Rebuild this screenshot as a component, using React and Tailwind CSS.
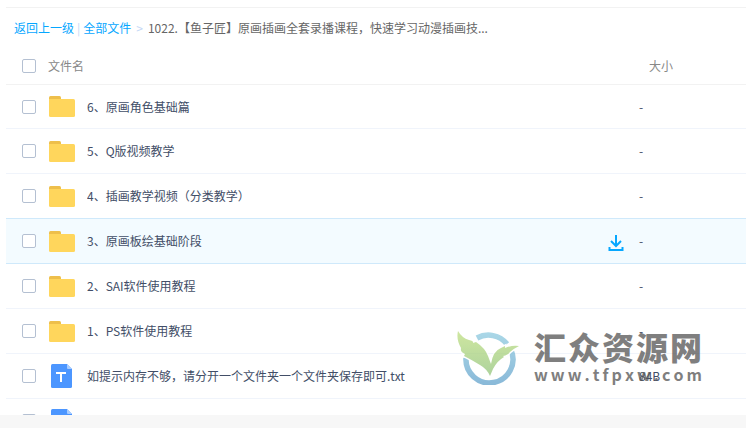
import { useState } from 'react';

const files = [
  { id: 6, type: 'folder', name: '6、原画角色基础篇', size: '-' },
  { id: 5, type: 'folder', name: '5、Q版视频教学', size: '-' },
  { id: 4, type: 'folder', name: '4、插画教学视频（分类教学）', size: '-' },
  { id: 3, type: 'folder', name: '3、原画板绘基础阶段', size: '-' },
  { id: 2, type: 'folder', name: '2、SAI软件使用教程', size: '-' },
  { id: 1, type: 'folder', name: '1、PS软件使用教程', size: '-' },
  { id: 7, type: 'text', name: '如提示内存不够，请分开一个文件夹一个文件夹保存即可.txt', size: '84B' },
  { id: 8, type: 'text', name: '', size: '' },
];

const ACTIVE_ID = 3;

function FolderIcon() {
  return (
    <svg width="26" height="21" viewBox="0 0 26 21" aria-hidden="true">
      <path d="M0 1.5Q0 0 1.5 0H10.5Q12 0 12 1.5V8H0Z" fill="#eebf4b" />
      <path d="M0 3H24.5Q26 3 26 4.5V19.5Q26 21 24.5 21H1.5Q0 21 0 19.5Z" fill="#ffd65c" />
    </svg>
  );
}

function TextFileIcon() {
  return (
    <svg width="22" height="24" viewBox="0 0 22 24" aria-hidden="true">
      <path d="M1.5 0H16L21 5V22.5Q21 24 19.5 24H1.5Q0 24 0 22.5V1.5Q0 0 1.5 0Z" fill="#4c96ff" />
      <path d="M16 0L21 5H17Q16 5 16 4Z" fill="#a9cdff" />
      <path d="M5 9H15M10 9V18" stroke="#fff" strokeWidth="2" fill="none" />
    </svg>
  );
}

function DownloadIcon() {
  return (
    <svg width="16" height="16" viewBox="0 0 16 16" fill="none" stroke="#06a7ff" strokeWidth="2" aria-hidden="true">
      <path d="M8 0V10.5M3 6L8 11L13 6M1.5 12V15H14.5V12" />
    </svg>
  );
}

function Checkbox({ label, checked, onChange }) {
  return (
    <input
      type="checkbox"
      aria-label={label}
      checked={checked}
      onChange={onChange}
      className="block size-[14px] appearance-none rounded-[2px] border border-[#b4c0d2] bg-white checked:bg-[#06a7ff]"
    />
  );
}

function FileRow({ file, selected, onToggle }) {
  const active = file.id === ACTIVE_ID;
  const beforeActive = file.id === ACTIVE_ID + 1;
  const line = active || beforeActive ? 'border-[#cfe9fb]' : 'border-[#f0f4fb]';

  return (
    <tr className={active ? 'h-[45px] bg-[#f3fbff]' : 'h-[45px] first:h-11'}>
      <td className={`border-b pl-4 ${line}`}>
        <Checkbox label={file.name || '文件'} checked={selected} onChange={onToggle} />
      </td>
      <td className={`border-b ${line}`}>
        <div className="flex items-center gap-[11px] pr-[15px]">
          <span className="flex w-7 shrink-0 justify-center">
            {file.type === 'folder' ? <FolderIcon /> : <TextFileIcon />}
          </span>
          <span className="flex-1 truncate">{file.name}</span>
          {active && (
            <button type="button" aria-label="下载" className="mt-1">
              <DownloadIcon />
            </button>
          )}
        </div>
      </td>
      <td className={`border-b ${line}`}>{file.size}</td>
    </tr>
  );
}

function Watermark() {
  return (
    <div className="pointer-events-none absolute right-11 bottom-[42px] flex items-center gap-[15px] opacity-75">
      <svg width="62" height="54" viewBox="0 0 62 54" aria-hidden="true">
        <defs>
          <linearGradient id="leaf" x1="0" y1="0" x2="0" y2="1">
            <stop offset="0" stopColor="#bfdf80" />
            <stop offset="1" stopColor="#92c47c" />
          </linearGradient>
          <linearGradient id="ring" x1="0" y1="0" x2="0" y2="54" gradientUnits="userSpaceOnUse">
            <stop offset="0" stopColor="#90cce0" />
            <stop offset="1" stopColor="#62a2cc" />
          </linearGradient>
        </defs>
        <path d="M20 7A24 24 0 0 1 50 13" stroke="url(#ring)" strokeWidth="5.500" fill="none" />
        <path d="M9 27A23.5 23.5 0 1 0 54 19" stroke="url(#ring)" strokeWidth="5.500" fill="none" />
        <path
          d="M1 0Q5 7 12 9Q17 10 16 12L19 11Q28 17 31 25L34 33Q36 20 44 17L48 15L48 17Q55 14 62 15Q56 18 53 21Q51 24 46 25L47 26Q40 30 36 38L33 45Q30 38 23 34Q15 29 7 25L8 23Q3 21 4 17Q-1 8 1 0Z"
          fill="url(#leaf)"
          stroke="#fff"
          strokeWidth="3"
          paintOrder="stroke"
        />
      </svg>
      <div className="w-[168px] text-[#555]">
        <p className="flex justify-between text-[32px] leading-8 font-black">
          {Array.from('汇众资源网').map((char) => <span key={char}>{char}</span>)}
        </p>
        <p className="flex justify-between text-base leading-6 font-bold">
          {Array.from('www.tfpxw.com').map((char, i) => <span key={i}>{char}</span>)}
        </p>
      </div>
    </div>
  );
}

function App() {
  const [selected, setSelected] = useState([]);

  const toggle = (id) => {
    setSelected((ids) => (ids.includes(id) ? ids.filter((item) => item !== id) : [...ids, id]));
  };

  const toggleAll = () => {
    setSelected(selected.length === files.length ? [] : files.map((file) => file.id));
  };

  return (
    <div lang="zh-CN" className="relative flex h-screen flex-col bg-[#f7f7f7] font-['Noto_Sans_CJK_SC',sans-serif] text-xs text-[#424e67]">
      <main className="mb-[13px] min-h-0 flex-1 overflow-hidden bg-white pt-[7px] pl-[6px]">
        <nav className="flex h-[41px] items-center border-t border-[#f2f2f2] pl-2 text-[#666]">
          <a href="#back" className="text-[#06a7ff]">返回上一级</a>
          <span className="mx-[3px] text-[#c4d8f6]">|</span>
          <a href="#all" className="text-[#06a7ff]">全部文件</a>
          <span className="mx-[5px] text-[#c4d8f6]">&gt;</span>
          <span>1022.【鱼子匠】原画插画全套录播课程，快速学习动漫插画技...</span>
        </nav>
        <table className="w-full table-fixed border-separate border-spacing-0 text-left">
          <thead>
            <tr className="h-[37px] text-[#888]">
              <th className="w-[42px] border-b border-[#f2f2f2] pl-4">
                <Checkbox label="全选" checked={selected.length === files.length} onChange={toggleAll} />
              </th>
              <th className="border-b border-[#f2f2f2] font-normal">文件名</th>
              <th className="w-[107px] border-b border-[#f2f2f2] pl-[10px] font-normal">大小</th>
            </tr>
          </thead>
          <tbody>
            {files.map((file) => (
              <FileRow
                key={file.id}
                file={file}
                selected={selected.includes(file.id)}
                onToggle={() => toggle(file.id)}
              />
            ))}
          </tbody>
        </table>
      </main>
      <Watermark />
    </div>
  );
}

export default App;
